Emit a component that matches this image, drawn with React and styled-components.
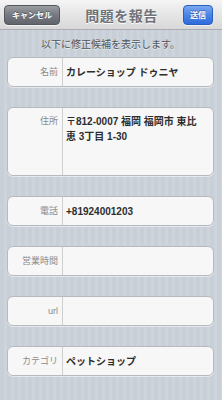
import React from "react";
import styled, { createGlobalStyle } from "styled-components";

const GlobalStyle = createGlobalStyle`
    html, body {
        margin: 0;
        padding: 0;
    }
    body {
        font-family: "Liberation Sans", "Noto Sans CJK JP", sans-serif;
        width: 222px;
        height: 400px;
        overflow: hidden;
    }
`;

const fields = [
    { label: "名前", value: "カレーショップ ドゥニヤ" },
    { label: "住所", value: "〒812-0007 福岡 福岡市 東比恵 3丁目 1-30", tall: true },
    { label: "電話", value: "+81924001203" },
    { label: "営業時間", value: "" },
    { label: "url", value: "" },
    { label: "カテゴリ", value: "ペットショップ" },
];

function App() {
    return (
        <Page>
            <GlobalStyle />
            <NavBar>
                <NavButton>キャンセル</NavButton>
                <Title>問題を報告</Title>
                <NavButton primary>送信</NavButton>
            </NavBar>
            <Content>
                <Hint>以下に修正候補を表示します。</Hint>
                <List>
                    {fields.map((f) => (
                        <Row key={f.label} tall={f.tall}>
                            <Label tall={f.tall}>{f.label}</Label>
                            <Value tall={f.tall}>{f.value}</Value>
                        </Row>
                    ))}
                </List>
            </Content>
        </Page>
    );
}

export default App;

const Page = styled.div`
    width: 222px;
    height: 400px;
    display: flex;
    flex-direction: column;
    background-color: #cbd2d9;
    background-image: repeating-linear-gradient(
        90deg,
        #c8cfd7 0px,
        #c8cfd7 4px,
        #cdd4db 4px,
        #cdd4db 7px
    );
`;

const NavBar = styled.div`
    height: 30px;
    box-sizing: border-box;
    display: flex;
    align-items: center;
    justify-content: space-between;
    padding: 0 9px 0 4px;
    background: linear-gradient(#f5f5f5, #e4e4e4 55%, #d8d8d8);
    border-bottom: 1px solid #a9adb2;
`;

const NavButton = styled.div`
    height: 20px;
    box-sizing: border-box;
    padding: 0 ${(p) => (p.primary ? "6px" : "7px")};
    min-width: ${(p) => (p.primary ? "28px" : "54px")};
    display: flex;
    align-items: center;
    justify-content: center;
    border-radius: 4px;
    font-family: "Noto Sans CJK JP", sans-serif;
    font-size: 8px;
    font-weight: 700;
    color: #fff;
    text-shadow: 0 -1px 0 rgba(0, 0, 0, 0.35);
    border: 1px solid ${(p) => (p.primary ? "#2a5fc0" : "#55595e")};
    background: ${(p) =>
        p.primary
            ? "linear-gradient(#7aa9f0, #4a84e6 50%, #2f6ddc)"
            : "linear-gradient(#9a9ea3, #767a80 50%, #62666c)"};
    box-shadow: 0 1px 0 rgba(255, 255, 255, 0.6);
`;

const Title = styled.div`
    font-family: "Noto Sans CJK JP", sans-serif;
    font-size: 14px;
    font-weight: 700;
    color: #707378;
    text-shadow: 0 1px 0 #fff;
    letter-spacing: 0.5px;
`;

const Content = styled.div`
    display: flex;
    flex-direction: column;
    padding: 0 8px 0 7px;
`;

const Hint = styled.div`
    height: 27px;
    display: flex;
    align-items: center;
    justify-content: center;
    font-family: "Noto Sans CJK JP", sans-serif;
    font-size: 10px;
    color: #4f5459;
    text-shadow: 0 1px 0 rgba(255, 255, 255, 0.6);
`;

const List = styled.div`
    display: flex;
    flex-direction: column;
    gap: 20px;
`;

const Row = styled.div`
    height: ${(p) => (p.tall ? "69px" : "30px")};
    box-sizing: border-box;
    display: flex;
    background: #f7f7f7;
    border: 1px solid #b6babf;
    border-radius: 6px;
    box-shadow: 0 1px 0 rgba(255, 255, 255, 0.5);
    overflow: hidden;
`;

const Label = styled.div`
    width: 55px;
    box-sizing: border-box;
    flex-shrink: 0;
    padding: ${(p) => (p.tall ? "6px 4px 0 0" : "0 4px 0 0")};
    display: flex;
    align-items: ${(p) => (p.tall ? "flex-start" : "center")};
    justify-content: flex-end;
    border-right: 1px solid #cfcfcf;
    font-size: 9px;
    line-height: 15px;
    color: #8a8a8a;
`;

const Value = styled.div`
    flex: 1;
    padding: ${(p) => (p.tall ? "6px 9px 0 3px" : "0 9px 0 3px")};
    display: flex;
    align-items: ${(p) => (p.tall ? "flex-start" : "center")};
    font-size: 10px;
    line-height: 15px;
    font-weight: 700;
    color: #2e2e2e;
`;
